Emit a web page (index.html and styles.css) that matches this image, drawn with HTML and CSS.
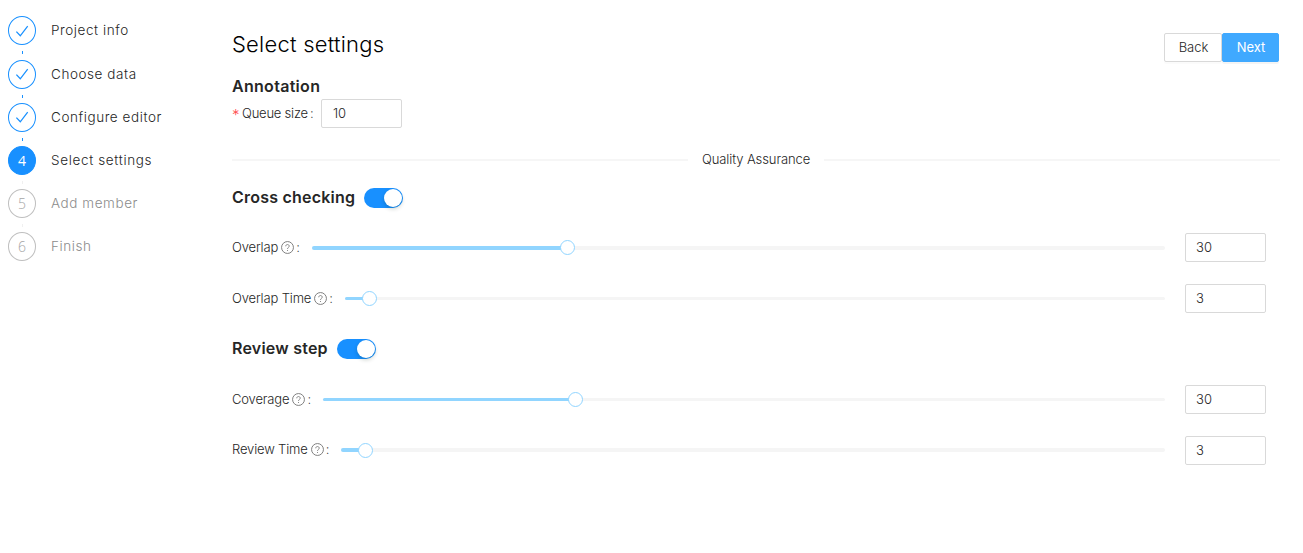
FILE: index.html
```
<!DOCTYPE html>
<html lang="en">
<head>
<meta charset="utf-8">
<title>Select settings</title>
<link rel="stylesheet" href="styles.css">
</head>
<body>
<svg class="defs" aria-hidden="true">
  <symbol id="check" viewBox="0 0 14 14"><path d="M1.4 7.6 5.3 11.8 12.7 2.1" fill="none" stroke="currentColor" stroke-width="1.25"/></symbol>
  <symbol id="help" viewBox="0 0 14 14"><g fill="none" stroke="currentColor"><circle cx="7" cy="7" r="6.4" stroke-width="1"/><path d="M5.1 5.7C5.1 4.5 5.9 3.8 7 3.8S8.9 4.6 8.9 5.6C8.9 6.9 7 6.9 7 8.5" stroke-width=".95"/></g><circle cx="7" cy="10.2" r=".6" fill="currentColor"/></symbol>
</svg>
<div class="page">
  <nav class="steps">
    <div class="step done"><span class="dot"><svg class="check"><use href="#check"/></svg></span><span class="name">Project info</span></div>
    <div class="step done"><span class="dot"><svg class="check"><use href="#check"/></svg></span><span class="name">Choose data</span></div>
    <div class="step done"><span class="dot"><svg class="check"><use href="#check"/></svg></span><span class="name">Configure editor</span></div>
    <div class="step active"><span class="dot">4</span><span class="name">Select settings</span></div>
    <div class="step wait"><span class="dot">5</span><span class="name">Add member</span></div>
    <div class="step wait"><span class="dot">6</span><span class="name">Finish</span></div>
  </nav>
  <main class="main">
    <header class="header">
      <h1 class="title">Select settings</h1>
      <div class="actions"><button class="btn">Back</button><button class="btn primary">Next</button></div>
    </header>
    <h2 class="heading annotation">Annotation</h2>
    <div class="field"><span class="star">*</span><span class="queue">Queue size</span><span class="qcolon">:</span><input class="number" value="10"></div>
    <div class="divider"><span>Quality Assurance</span></div>
    <h2 class="heading"><span class="text">Cross checking</span><span class="switch"></span></h2>
    <div class="row first overlap"><div class="label">Overlap<svg class="help"><use href="#help"/></svg>:</div><div class="slider"><div class="fill" style="width:30%"></div></div><input class="number" value="30"></div>
    <div class="row overlap-time"><div class="label">Overlap Time<svg class="help"><use href="#help"/></svg>:</div><div class="slider thin"><div class="fill" style="width:3%"></div></div><input class="number" value="3"></div>
    <h2 class="heading review"><span class="text">Review step</span><span class="switch"></span></h2>
    <div class="row first coverage"><div class="label">Coverage<svg class="help"><use href="#help"/></svg>:</div><div class="slider thin"><div class="fill" style="width:30%"></div></div><input class="number" value="30"></div>
    <div class="row review-time"><div class="label">Review Time<svg class="help"><use href="#help"/></svg>:</div><div class="slider"><div class="fill" style="width:3%"></div></div><input class="number" value="3"></div>
  </main>
</div>
</body>
</html>
```
FILE: styles.css
```
* { box-sizing: border-box; }
body { margin: 0; background: #fff; color: #262626; font: 300 13px/20px Inter, sans-serif; letter-spacing: -.1px; }
.defs { display: none; }
.page { display: flex; height: 553px; }
.steps { width: 232px; padding: 16px 0 0 8px; display: flex; flex-direction: column; gap: 14.1px; }
.step { display: flex; align-items: center; gap: 15px; height: 29px; position: relative; font-size: 13.5px; letter-spacing: .57px; }
.step:first-child { margin-bottom: .8px; }
.step:first-child .name { padding-bottom: 1px; }
.active .name, .wait .name { padding-bottom: 2px; }
.active .name { letter-spacing: .65px; }
.dot { display: flex; align-items: center; justify-content: center; width: 28px; height: 29px; border: 1px solid #1890ff; border-radius: 50%; color: #1890ff; letter-spacing: 0; font-family: "Open Sans", sans-serif; font-size: 14px; }
.check { width: 14px; height: 14px; }
.step:not(:last-child)::after { content: ""; position: absolute; left: 14px; bottom: -9px; width: 1px; height: 3px; background: #1890ff; }
.active .dot { background: #1890ff; color: #fff; font-weight: 400; }
.wait .dot { border-color: #bfbfbf; color: #a6a6a6; }
.wait .name { color: #8c8c8c; }
.step.active::after, .step.wait::after { background: #f0f0f0; }
.main { width: 1048px; padding-top: 33px; }
.header { display: flex; justify-content: space-between; height: 29px; padding-right: 1px; }
.title { margin: 0; font-size: 22px; line-height: 23px; font-weight: 300; letter-spacing: .22px; color: #000; }
.actions { display: flex; }
.btn { width: 58px; height: 29px; padding: 0 0 1px 1px; border: 1px solid #d9d9d9; border-radius: 2px; background: #fff; color: #262626; font: inherit; box-shadow: 0 2px 0 rgba(0,0,0,.016); }
.btn.primary { width: 57px; border-color: #40a9ff; background: #40a9ff; color: #fff; font-weight: 400; box-shadow: 0 2px 0 rgba(0,0,0,.045); }
.heading { display: flex; align-items: center; gap: 9px; height: 24px; margin: 0; font-size: 16px; line-height: 18px; font-weight: 600; letter-spacing: .22px; color: #262626; }
.heading .text { padding-bottom: 2px; }
.annotation { margin: 12px 0 1px; letter-spacing: .3px; }
.review { margin-top: 24px; }
.field { display: flex; align-items: center; height: 29px; white-space: nowrap; }
.star { width: 10px; color: #ff4d4f; font-size: 15px; padding-top: 2px; }
.queue { width: 68px; padding-bottom: 1px; letter-spacing: -.22px; }
.qcolon { width: 11px; padding-bottom: 1px; }
.number { width: 81px; height: 29px; padding: 0 10px 1px; border: 1px solid #d9d9d9; border-radius: 2px; color: #262626; font: inherit; background: #fff; }
.field .number { padding-left: 11px; }
.divider { display: flex; align-items: center; gap: 14px; height: 20px; margin: 22px 0 16px; }
.divider span { padding-bottom: 2px; white-space: nowrap; }
.divider::before, .divider::after { content: ""; flex: 1; height: 2px; background: #f6f6f6; }
.divider::before { flex: 0 0 456px; }
.switch { width: 39px; height: 20px; padding: 1px 1px 1px 20px; border-radius: 10px; background: #1890ff; }
.switch::before { content: ""; display: block; width: 18px; height: 18px; border-radius: 50%; background: #fff; box-shadow: 0 2px 4px rgba(0,35,11,.2); }
.row { display: flex; align-items: center; height: 29px; margin-top: 22px; padding-right: 14px; }
.row.first { margin-top: 23px; }
.row.coverage { margin-top: 24px; }
.label { display: flex; align-items: center; flex: none; padding-bottom: 1px; letter-spacing: -.15px; }
.overlap .label { width: 80px; }
.overlap-time .label { width: 113px; }
.coverage .label { width: 91px; }
.review-time .label { width: 109px; padding-bottom: 3px; }
.help { width: 13px; height: 13px; margin: 1px 2px 0 3px; color: #777; }
.slider { flex: 1; height: 4px; margin-right: 20px; border-radius: 2px; background: #f5f5f5; }
.review-time .slider { margin-bottom: 1px; }
.slider.thin { height: 3px; }
.fill { display: flex; align-items: center; justify-content: flex-end; height: 100%; border-radius: 2px; background: #91d5ff; }
.fill::after { content: ""; flex: none; width: 13px; height: 13px; margin-right: -7px; border: 1.5px solid #91d5ff; border-radius: 50%; background: #fff; }
```
